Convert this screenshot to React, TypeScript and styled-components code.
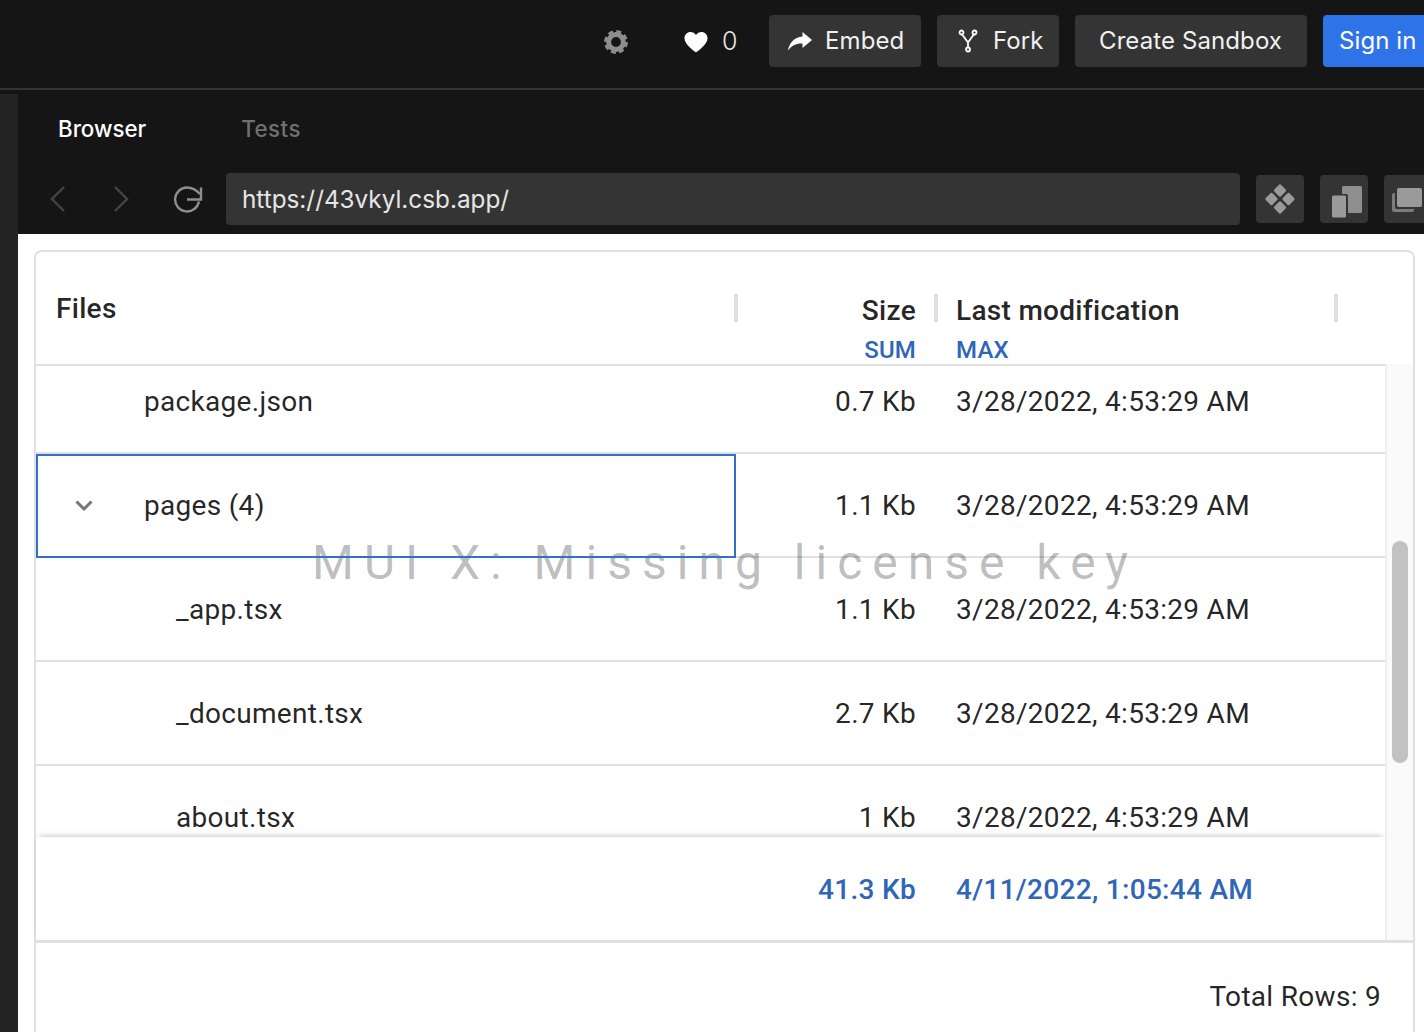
import React from 'react';
import styled, { createGlobalStyle } from 'styled-components';

const GlobalStyle = createGlobalStyle`
  html, body {
    margin: 0;
    height: 100%;
    overflow: hidden;
    background: #151515;
  }
  * {
    box-sizing: border-box;
  }
`;

const rows = [
  { name: 'package.json', size: '0.7 Kb', depth: 0 },
  { name: 'pages (4)', size: '1.1 Kb', depth: 0, group: true },
  { name: '_app.tsx', size: '1.1 Kb', depth: 1 },
  { name: '_document.tsx', size: '2.7 Kb', depth: 1 },
  { name: 'about.tsx', size: '1 Kb', depth: 1 },
];

const GearIcon = () => (
  <svg width="24" height="24" viewBox="0 0 24 24">
    <circle cx="12" cy="12" r="7.400" fill="none" stroke="#8e8e8e" strokeWidth="5" />
    <circle cx="12" cy="12" r="10.600" fill="none" stroke="#8e8e8e" strokeWidth="2.600" strokeDasharray="5 3.330" />
  </svg>
);

const HeartIcon = () => (
  <svg width="24" height="24" viewBox="0 -2.400 26 26">
    <path
      d="M13 23C11.600 21.800 0.500 14.600 0.500 7.600 0.500 3.600 3.600 0.800 7 0.800c2.500 0 4.700 1.300 6 3.400 1.300-2.100 3.500-3.400 6-3.400 3.400 0 6.500 2.800 6.500 6.800 0 7-11.100 14.200-12.500 15.400z"
      fill="#fff"
    />
  </svg>
);

const ShareIcon = () => (
  <svg width="26" height="20" viewBox="0 0 26 20">
    <path d="M15.500 1 25 9l-9.500 8v-4.600C9 12.200 4.500 14.500 1 19.500 2.300 12 7 6.300 15.500 5.500z" fill="#fff" />
  </svg>
);

const ForkIcon = () => (
  <svg width="20" height="26" viewBox="0 0 20 26" fill="none" stroke="#fff" strokeWidth="1.800">
    <circle cx="3.500" cy="4.500" r="2" />
    <circle cx="16.500" cy="4.500" r="2" />
    <circle cx="10" cy="21.500" r="2" />
    <path d="M4.200 6.500 10 14.500l5.800-8M10 14.500v5" />
  </svg>
);

const BackIcon = () => (
  <svg width="18" height="28" viewBox="0 0 18 28" fill="none" stroke="#444" strokeWidth="2.400">
    <path d="M15 2 3 14l12 12" />
  </svg>
);

const NextIcon = () => (
  <svg width="18" height="28" viewBox="0 0 18 28" fill="none" stroke="#444" strokeWidth="2.400">
    <path d="M3 2l12 12L3 26" />
  </svg>
);

const ReloadIcon = () => (
  <svg width="30" height="28" viewBox="0 0 30 28" fill="none" stroke="#8e8e8e" strokeWidth="2.400">
    <path d="M25.900 16.500A12 12 0 1 1 14 2.500c5 0 9 2 13 6.500" />
    <path d="M28 2.500v12H14" />
  </svg>
);

const DiamondsIcon = () => (
  <svg width="32" height="32" viewBox="0 0 32 32" fill="#9a9a9a">
    <rect x="11.250" y="2.750" width="9.500" height="9.500" rx="1.500" transform="rotate(45 16 7.500)" />
    <rect x="11.250" y="19.750" width="9.500" height="9.500" rx="1.500" transform="rotate(45 16 24.500)" />
    <rect x="2.750" y="11.250" width="9.500" height="9.500" rx="1.500" transform="rotate(45 7.500 16)" />
    <rect x="19.750" y="11.250" width="9.500" height="9.500" rx="1.500" transform="rotate(45 24.500 16)" />
  </svg>
);

const SplitIcon = () => (
  <svg width="36" height="38" viewBox="-6 -6 36 38" fill="#9a9a9a">
    <path d="M10 1.500A1.500 1.500 0 0 1 11.500 0h17A1.500 1.500 0 0 1 30 1.500v24a1.500 1.500 0 0 1-1.500 1.500H16V10a2 2 0 0 0-2-2h-4z" fill="#8e8e8e" />
    <rect x="0" y="9.500" width="14" height="22" rx="1.500" />
  </svg>
);

const WindowsIcon = () => (
  <svg width="32" height="26" viewBox="0 0 32 26" fill="#9a9a9a">
    <rect x="5" y="2" width="25" height="19" rx="2" />
    <path d="M0 9a2 2 0 0 1 2-2h1v14a2 2 0 0 0 2 2h17v1a2 2 0 0 1-2 2H2a2 2 0 0 1-2-2z" fill="#7c7c7c" />
  </svg>
);

const ChevronIcon = () => (
  <svg width="18" height="12" viewBox="0 0 18 12" fill="none" stroke="#757575" strokeWidth="3">
    <path d="M1.500 1.500 9 9l7.500-7.500" />
  </svg>
);

const App = () => {
  return (
    <Page>
      <GlobalStyle />
      <TopBar>
        <GearSlot>
          <GearIcon />
        </GearSlot>
        <Likes>
          <HeartIcon />
          <span>0</span>
        </Likes>
        <HeaderButton $width={152} $pad={18}>
          <ButtonIcon>
            <ShareIcon />
          </ButtonIcon>
          Embed
        </HeaderButton>
        <HeaderButton $width={122} $pad={18}>
          <ButtonIcon>
            <ForkIcon />
          </ButtonIcon>
          Fork
        </HeaderButton>
        <HeaderButton $width={232} $pad={24}>
          Create Sandbox
        </HeaderButton>
        <SignIn>Sign in</SignIn>
      </TopBar>
      <Workspace>
        <SideStrip />
        <Preview>
          <Tabs>
            <Tab $active>Browser</Tab>
            <Tab>Tests</Tab>
          </Tabs>
          <AddressRow>
            <NavSlot $width={32}>
              <BackIcon />
            </NavSlot>
            <NavSlot $width={32} $left={31}>
              <NextIcon />
            </NavSlot>
            <NavSlot $width={32} $left={35}>
              <ReloadIcon />
            </NavSlot>
            <UrlBox>https://43vkyl.csb.app/</UrlBox>
            <ToolButton>
              <DiamondsIcon />
            </ToolButton>
            <ToolButton>
              <SplitIcon />
            </ToolButton>
            <ToolButton>
              <WindowsIcon />
            </ToolButton>
          </AddressRow>
          <Viewport>
            <Grid>
              <HeadRow>
                <FilesHead>
                  Files
                  <Separator />
                </FilesHead>
                <ColumnHead $right>
                  <HeadTitle>Size</HeadTitle>
                  <Aggregate>SUM</Aggregate>
                  <Separator />
                </ColumnHead>
                <ColumnHead>
                  <HeadTitle>Last modification</HeadTitle>
                  <Aggregate>MAX</Aggregate>
                  <Separator />
                </ColumnHead>
              </HeadRow>
              <BodyArea>
                <RowsColumn>
                  <Scroller>
                    <ScrollInner>
                      {rows.map((row) => (
                        <Row key={row.name}>
                          <NameCell $depth={row.depth} $focused={row.group}>
                            {row.group && (
                              <ChevronSlot>
                                <ChevronIcon />
                              </ChevronSlot>
                            )}
                            {row.name}
                          </NameCell>
                          <SizeCell>{row.size}</SizeCell>
                          <DateCell>3/28/2022, 4:53:29 AM</DateCell>
                        </Row>
                      ))}
                    </ScrollInner>
                  </Scroller>
                  <PinnedRow>
                    <PinnedSpacer />
                    <PinnedSize>41.3 Kb</PinnedSize>
                    <PinnedDate>4/11/2022, 1:05:44 AM</PinnedDate>
                  </PinnedRow>
                </RowsColumn>
                <Track>
                  <Thumb />
                </Track>
              </BodyArea>
              <GridFooter>Total Rows: 9</GridFooter>
              <Watermark>MUI X: Missing license key</Watermark>
            </Grid>
          </Viewport>
        </Preview>
      </Workspace>
    </Page>
  );
};

const Page = styled.div`
  width: 1424px;
  height: 1032px;
  overflow: hidden;
  background: #151515;
  display: flex;
  flex-direction: column;
`;

const TopBar = styled.header`
  height: 90px;
  flex-shrink: 0;
  border-bottom: 2px solid #333;
  padding: 15px 0 0 604px;
  display: flex;
  align-items: flex-start;
  gap: 16px;
  font-family: Inter, 'Liberation Sans', sans-serif;
  font-size: 24px;
  color: #fff;
  white-space: nowrap;
`;

const GearSlot = styled.div`
  width: 24px;
  height: 54px;
  margin-right: 40px;
  flex-shrink: 0;
  display: flex;
  align-items: center;
  justify-content: center;
`;

const Likes = styled.div`
  height: 52px;
  width: 69px;
  flex-shrink: 0;
  display: flex;
  align-items: center;
  gap: 14px;
  color: #e6e6e6;
  font-size: 25px;
  font-weight: 300;
`;

const HeaderButton = styled.div<{ $width: number; $pad: number }>`
  width: ${(p) => p.$width}px;
  height: 52px;
  flex-shrink: 0;
  background: #343434;
  border-radius: 4px;
  padding: 0 0 1px ${(p) => p.$pad}px;
  display: flex;
  align-items: center;
  gap: 12px;
  letter-spacing: 0.1px;
  color: #f0f0f0;
`;

const ButtonIcon = styled.span`
  width: 26px;
  margin-top: 1px;
  display: flex;
  justify-content: center;
`;

const SignIn = styled.div`
  width: 120px;
  height: 52px;
  flex-shrink: 0;
  background: #2f73e8;
  border-radius: 4px;
  padding: 0 0 1px 16px;
  display: flex;
  align-items: center;
  letter-spacing: 0.1px;
  color: #fff;
`;

const Workspace = styled.div`
  flex: 1;
  min-height: 0;
  display: flex;
  padding-top: 4px;
`;

const SideStrip = styled.div`
  width: 18px;
  flex-shrink: 0;
  background: #242424;
`;

const Preview = styled.div`
  flex: 1;
  min-width: 0;
  margin-top: -4px;
  display: flex;
  flex-direction: column;
`;

const Tabs = styled.div`
  height: 78px;
  padding: 0 0 2px 40px;
  display: flex;
  align-items: center;
  gap: 95px;
  font-family: Inter, 'Liberation Sans', sans-serif;
`;

const Tab = styled.div<{ $active?: boolean }>`
  font-size: 22.300px;
  font-weight: 500;
  color: ${(p) => (p.$active ? '#fff' : '#707070')};
  letter-spacing: ${(p) => (p.$active ? '0' : '0.5px')};
`;

const AddressRow = styled.div`
  height: 66px;
  padding: 5px 0 9px 24px;
  display: flex;
  align-items: flex-start;
`;

const NavSlot = styled.div<{ $width: number; $left?: number }>`
  width: ${(p) => p.$width}px;
  height: 52px;
  margin-left: ${(p) => p.$left || 0}px;
  flex-shrink: 0;
  display: flex;
  align-items: center;
  justify-content: center;
`;

const UrlBox = styled.div`
  width: 1014px;
  height: 52px;
  flex-shrink: 0;
  margin-left: 22px;
  padding-left: 16px;
  background: #343434;
  border-radius: 4px;
  display: flex;
  align-items: center;
  font-family: Inter, 'Liberation Sans', sans-serif;
  font-size: 24.300px;
  color: #e6e6e6;
`;

const ToolButton = styled.div`
  width: 48px;
  height: 48px;
  margin: 2px 0 0 16px;
  flex-shrink: 0;
  background: #343434;
  border-radius: 4px;
  display: flex;
  align-items: center;
  justify-content: center;
`;

const Viewport = styled.main`
  flex: 1;
  min-height: 0;
  background: #fff;
  padding: 16px 9px 0 16px;
`;

const Grid = styled.div`
  position: relative;
  height: 820px;
  border: 2px solid #e0e0e0;
  border-radius: 8px;
  font-family: Roboto, 'Liberation Sans', sans-serif;
  font-size: 28px;
  letter-spacing: 0.3px;
  color: rgba(0, 0, 0, 0.87);
  display: flex;
  flex-direction: column;
`;

const HeadRow = styled.div`
  height: 114px;
  flex-shrink: 0;
  border-bottom: 2px solid #e0e0e0;
  display: grid;
  grid-template-columns: 700px 200px 400px;
`;

const FilesHead = styled.div`
  position: relative;
  padding: 41px 20px 0;
  font-weight: 500;
  line-height: 32px;
`;

const ColumnHead = styled.div<{ $right?: boolean }>`
  position: relative;
  padding: 43px 20px 0;
  text-align: ${(p) => (p.$right ? 'right' : 'left')};
`;

const HeadTitle = styled.div`
  font-weight: 500;
  line-height: 32px;
`;

const Aggregate = styled.div`
  margin-top: 9px;
  font-size: 24px;
  font-weight: 500;
  letter-spacing: 0.2px;
  line-height: 28px;
  color: #2f66b8;
`;

const Separator = styled.span`
  position: absolute;
  top: 42px;
  right: -2px;
  width: 4px;
  height: 28px;
  background: #e0e0e0;
`;

const BodyArea = styled.div`
  height: 577px;
  flex-shrink: 0;
  border-bottom: 3px solid #e0e0e0;
  display: flex;
`;

const RowsColumn = styled.div`
  width: 1349px;
  flex-shrink: 0;
  display: flex;
  flex-direction: column;
`;

const Scroller = styled.div`
  height: 471px;
  flex-shrink: 0;
  overflow: hidden;
`;

const ScrollInner = styled.div`
  margin-top: -16px;
`;

const Row = styled.div`
  height: 104px;
  border-bottom: 2px solid #e0e0e0;
  display: grid;
  grid-template-columns: 700px 200px 400px;
  align-items: stretch;
`;

const NameCell = styled.div<{ $depth: number; $focused?: boolean }>`
  position: relative;
  padding-left: ${(p) => 108 + p.$depth * 32}px;
  display: flex;
  align-items: center;
  ${(p) =>
    p.$focused &&
    'margin-bottom: -2px; padding-bottom: 2px; z-index: 1; outline: 2px solid #3070c8; outline-offset: -2px;'}
`;

const ChevronSlot = styled.span`
  position: absolute;
  left: 39px;
  top: 46px;
  display: flex;
`;

const SizeCell = styled.div`
  padding-right: 20px;
  display: flex;
  align-items: center;
  justify-content: flex-end;
`;

const DateCell = styled.div`
  padding-left: 20px;
  display: flex;
  align-items: center;
`;

const PinnedRow = styled.div`
  flex: 1;
  position: relative;
  padding-top: 2px;
  box-shadow: 0 -3px 6px -3px rgba(0, 0, 0, 0.3);
  background: #fff;
  display: grid;
  grid-template-columns: 700px 200px 400px;
  font-weight: 500;
  color: #2f66b8;
`;

const PinnedSpacer = styled.div``;

const PinnedSize = styled.div`
  padding-right: 20px;
  display: flex;
  align-items: center;
  justify-content: flex-end;
`;

const PinnedDate = styled.div`
  padding-left: 20px;
  display: flex;
  align-items: center;
`;

const Track = styled.div`
  flex: 1;
  position: relative;
  margin-top: -2px;
  background: #fafafa;
  border-left: 2px solid #ededed;
`;

const Thumb = styled.div`
  position: absolute;
  left: 5px;
  top: 177px;
  width: 16px;
  height: 222px;
  border-radius: 8px;
  background: #c2c2c2;
`;

const GridFooter = styled.div`
  height: 89px;
  flex-shrink: 0;
  padding: 38px 32px 0 0;
  text-align: right;
  line-height: 32px;
`;

const Watermark = styled.div`
  position: absolute;
  left: 276px;
  top: 283px;
  font-size: 48px;
  line-height: 56px;
  letter-spacing: 10px;
  white-space: nowrap;
  color: rgba(0, 0, 0, 0.27);
  pointer-events: none;
`;

export default App;
